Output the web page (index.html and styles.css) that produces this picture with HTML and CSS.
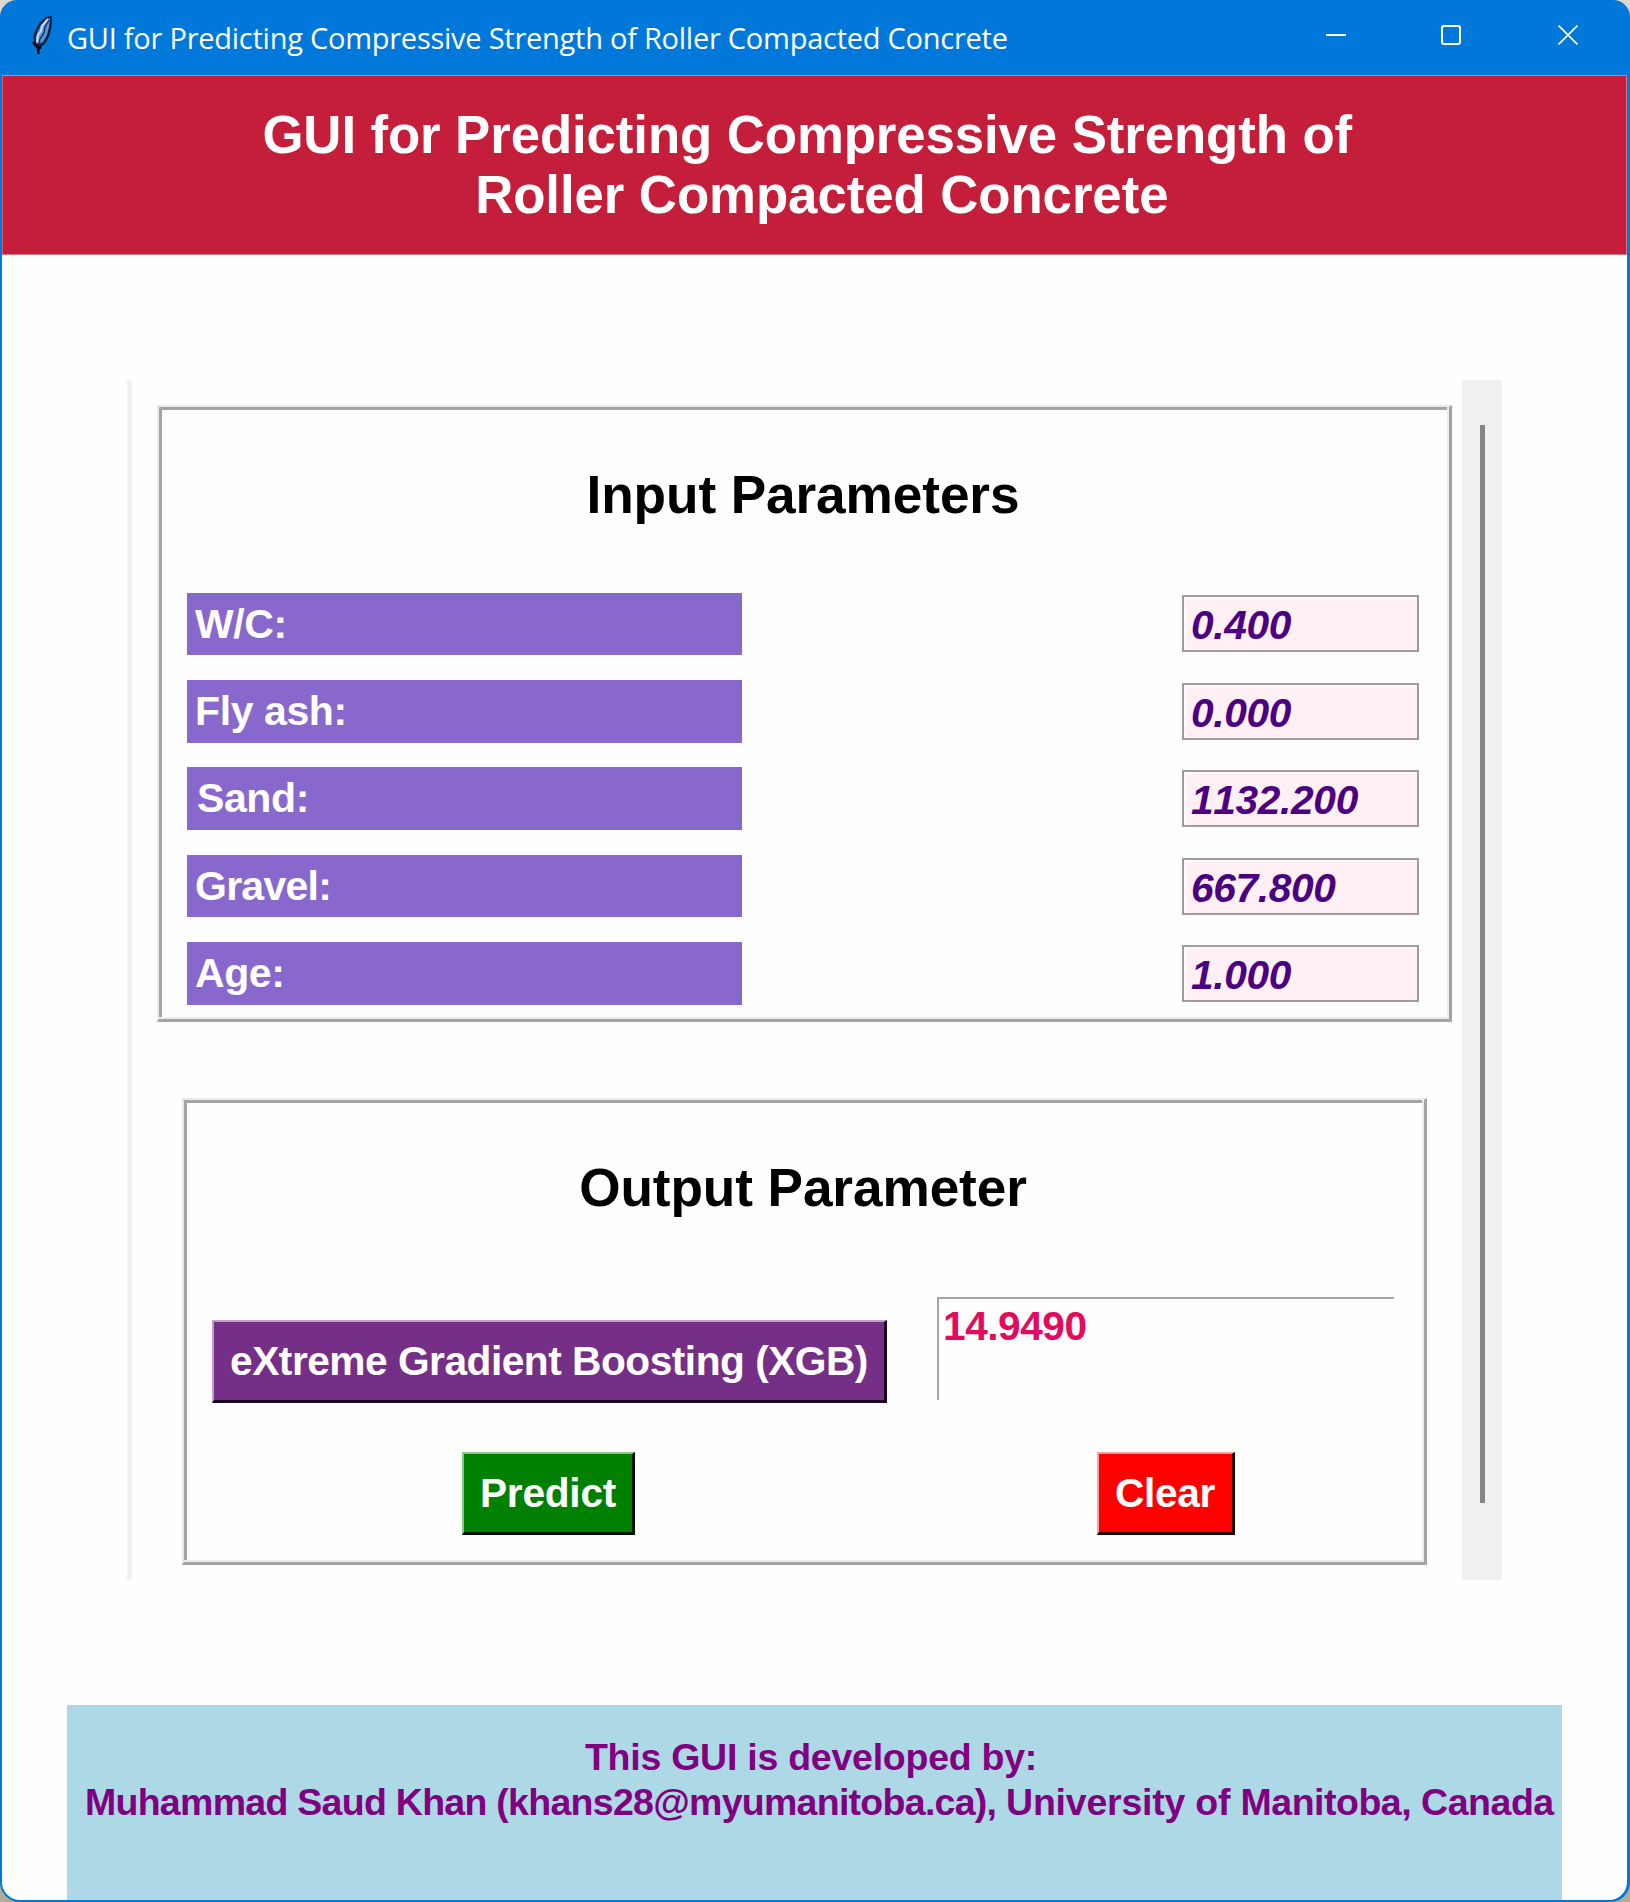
FILE: index.html
```html
<!DOCTYPE html>
<html lang="en">
<head>
<meta charset="utf-8">
<title>GUI for Predicting Compressive Strength of Roller Compacted Concrete</title>
<link rel="stylesheet" href="styles.css">
</head>
<body>
<div class="window">
  <div class="titlebar">
    <svg class="feather" width="22" height="40" viewBox="0 0 22 40">
      <path d="M20 1L14 2L8 7L4 14L1 21L2 26L1 30L5 33L6 39L8 33L13 29L17 22L19 15L20 9Z" fill="#0b2444"/>
      <path d="M18 3L14 5L9 10L6 16L4 22L4 28L7 29L11 27L15 20L17 12Z" fill="#5b94dc"/>
      <path d="M16 4L10 11L9 16L6 20L5 27" fill="none" stroke="#c4dcf6" stroke-width="2"/>
      <path d="M17 5L13 12L12 18L8 24L7 30" fill="none" stroke="#123058" stroke-width="1.4"/>
      <path d="M1 27L6 33L6.5 39M9 32L6 34" fill="none" stroke="#000" stroke-width="2.4"/>
    </svg>
    <div class="caption">GUI for Predicting Compressive Strength of Roller Compacted Concrete</div>
    <div class="controls">
      <svg width="20" height="20" viewBox="0 0 20 20"><path d="M0 10H20" stroke="#fff" stroke-width="2"/></svg>
      <svg class="maximize" width="20" height="20" viewBox="0 0 20 20"><rect x="1" y="1" width="18" height="18" rx="2" fill="none" stroke="#fff" stroke-width="2"/></svg>
      <svg width="20" height="20" viewBox="0 0 20 20"><path d="M.5 .5L19.5 19.5M19.5 .5L.5 19.5" stroke="#fff" stroke-width="1.7"/></svg>
    </div>
  </div>
  <div class="client">
    <h1 class="header"><span class="header-first">GUI for Predicting Compressive Strength of </span>
<span class="header-second"> Roller Compacted Concrete</span></h1>
    <div class="scroll-area">
      <div class="canvas">
        <div class="panel input-panel">
          <h2>Input Parameters</h2>
          <div class="rows">
            <div class="row"><div class="label">W/C:</div><div class="entry">0.400</div></div>
            <div class="row"><div class="label">Fly ash:</div><div class="entry">0.000</div></div>
            <div class="row"><div class="label label-sand">Sand:</div><div class="entry">1132.200</div></div>
            <div class="row"><div class="label label-gravel">Gravel:</div><div class="entry">667.800</div></div>
            <div class="row"><div class="label">Age:</div><div class="entry">1.000</div></div>
          </div>
        </div>
        <div class="panel output-panel">
          <h2>Output Parameter</h2>
          <div class="output-grid">
            <div class="btn btn-model">eXtreme Gradient Boosting (XGB)</div>
            <div class="result">14.9490</div>
            <div class="btn btn-predict">Predict</div>
            <div class="btn btn-clear">Clear</div>
          </div>
        </div>
      </div>
      <div class="scrollbar"><div class="thumb"></div></div>
    </div>
    <div class="footer"><span class="credit-intro"> This GUI is developed by: </span>
<span class="credit-author"> Muhammad Saud Khan (khans28@myumanitoba.ca), </span><span class="credit-univ">University of </span><span class="credit-place">Manitoba, Canada</span></div>
  </div>
</div>
</body>
</html>
```
FILE: styles.css
```css
* { box-sizing: border-box; }

body {
  margin: 0;
  background: linear-gradient(#dcd8ce, #b0aa96);
  font-family: "Liberation Sans", Arial, sans-serif;
  font-weight: bold;
}

.window {
  width: 1630px;
  height: 1902px;
  padding: 0 3px 2px 2px;
  display: flex;
  flex-direction: column;
  overflow: hidden;
  background: #0078d9;
  border-radius: 17px 17px 20px 20px;
}

.titlebar {
  flex: none;
  height: 75px;
  padding: 0 49px 5px 30px;
  display: flex;
  align-items: center;
  color: #fff;
}

.feather { flex: none; display: block; }

.caption {
  margin-left: 13px;
  padding-top: 5px;
  font: 400 29px/40px "Open Sans", "Noto Sans", sans-serif;
  letter-spacing: -0.25px;
  white-space: nowrap;
}

.controls { margin-left: auto; display: flex; gap: 96px; }
.controls svg { display: block; }
.controls .maximize { margin: 0 1px 0 -1px; }

.client {
  flex: 1;
  display: flex;
  flex-direction: column;
  overflow: hidden;
  background: #fefefe;
  border-radius: 0 0 18px 18px;
}

.header {
  flex: none;
  height: 180px;
  margin: 0;
  padding-top: 29px;
  border: 1px solid #dc7386;
  border-left-color: #d25d74;
  background: #c41e3a;
  color: #fff;
  font-size: 52.8px;
  line-height: 60px;
  text-align: center;
  white-space: pre;
}
.header-first { letter-spacing: -0.11px; }
.header-second { letter-spacing: -0.08px; }

.scroll-area {
  flex: none;
  width: 1375px;
  height: 1200px;
  margin: 125px 0 0 125px;
  display: flex;
  justify-content: space-between;
  border-left: 5px solid #f2f2f2;
}

.canvas {
  width: 1330px;
  padding-top: 25px;
  display: flex;
  flex-direction: column;
}

.panel {
  border: 2px solid #e8e8e8;
  border-right: 3px solid #a4a4a4;
  border-bottom: 3px solid #a4a4a4;
  box-shadow: inset -2px -2px 0 #ececec, inset 3px 3px 0 #a4a4a4;
}

h2 {
  margin: 0;
  color: #000;
  font-size: 53.2px;
  line-height: 61px;
  letter-spacing: -0.1px;
  text-align: center;
}

.input-panel {
  width: 1295px;
  height: 617px;
  margin-left: 25px;
  padding: 57px 30px 0 28px;
}

.rows {
  margin-top: 67.6px;
  display: flex;
  flex-direction: column;
  gap: 25px;
}

.row {
  height: 62.45px;
  display: flex;
  align-items: center;
  justify-content: space-between;
}

.label {
  width: 555px;
  height: 62.5px;
  padding-left: 8px;
  background: #8968cd;
  color: #fff;
  font-size: 41px;
  line-height: 62px;
  letter-spacing: -0.4px;
}
.label-sand { padding-left: 10px; }
.label-gravel { letter-spacing: -0.75px; }

.entry {
  width: 237px;
  height: 57px;
  padding-left: 7px;
  border: 2px solid #a29a9e;
  box-shadow: inset 2px 2px 0 #fffafc;
  background: #fff0f5;
  color: #4b0082;
  font-size: 40.7px;
  font-style: italic;
  font-kerning: none;
  line-height: 56px;
  letter-spacing: -0.35px;
}

.output-panel {
  width: 1245px;
  height: 467px;
  margin: 76px 0 0 50px;
  padding: 57px 30px 0 28px;
}

.output-grid {
  margin-top: 79px;
  display: grid;
  grid-template-columns: 675px 457px;
  grid-template-rows: 106px 83px;
  column-gap: 50px;
  row-gap: 49px;
}

.btn {
  height: 83px;
  justify-self: center;
  border: 2px solid;
  border-right-width: 3px;
  border-bottom-width: 3px;
  color: #fff;
  line-height: 79px;
  text-align: center;
  white-space: nowrap;
}

.btn-model {
  width: 675px;
  align-self: end;
  background: #752f87;
  border-color: #bfa0c8 #17081c #17081c #bfa0c8;
  font-size: 40.7px;
  letter-spacing: -0.5px;
}

.btn-predict {
  width: 173px;
  margin-right: 2px;
  background: #008000;
  border-color: #8cc88c #001400 #001400 #8cc88c;
  font-size: 40.7px;
  letter-spacing: -0.25px;
}

.btn-clear {
  width: 138px;
  background: #ff0000;
  border-color: #ff9c9c #1c0000 #1c0000 #ff9c9c;
  font-size: 40.7px;
  letter-spacing: -0.4px;
}

.result {
  height: 103px;
  padding-left: 4px;
  border-top: 2px solid #a4a4a4;
  border-left: 2px solid #a4a4a4;
  color: #e30b5c;
  font-size: 40.7px;
  line-height: 54px;
  letter-spacing: -0.5px;
}

.scrollbar {
  width: 40px;
  padding: 45px 0 77px;
  display: flex;
  justify-content: center;
  background: #f0f0f0;
}
.thumb { width: 5px; background: #868686; }

.footer {
  flex: none;
  width: 1495px;
  height: 195px;
  margin: 125px 0 0 65px;
  padding-top: 30px;
  background: #add8e6;
  color: #800080;
  font-size: 37.5px;
  line-height: 45px;
  text-align: center;
  white-space: pre;
}
.credit-intro { margin-right: 7px; letter-spacing: -0.25px; }
.credit-author { letter-spacing: -0.72px; }
.credit-univ { letter-spacing: -0.22px; }
.credit-place { letter-spacing: -0.48px; }
```
